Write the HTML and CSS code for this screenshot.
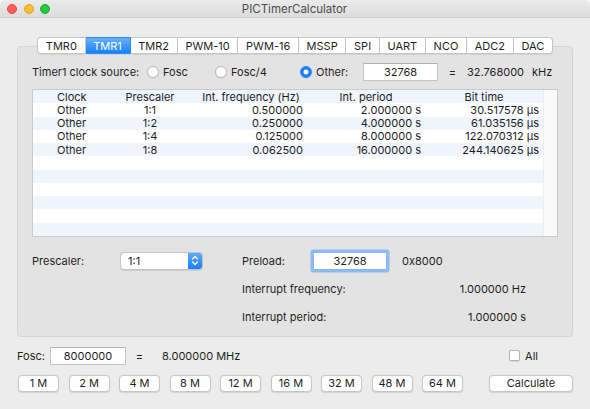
FILE: index.html
```html
<!DOCTYPE html>
<html lang="en">
<head>
    <meta charset="UTF-8">
    <title>PICTimerCalculator</title>
    <link rel="stylesheet" href="styles.css">
</head>
<body>
    <div class="window">
        <div class="titlebar">
            <div class="lights">
                <span class="light red"></span>
                <span class="light yellow"></span>
                <span class="light green"></span>
            </div>
            <div class="title">PICTimerCalculator</div>
        </div>

        <div class="content">
            <div class="tabs">
                <span class="tab">TMR0</span>
                <span class="tab active">TMR1</span>
                <span class="tab">TMR2</span>
                <span class="tab">PWM-10</span>
                <span class="tab">PWM-16</span>
                <span class="tab">MSSP</span>
                <span class="tab">SPI</span>
                <span class="tab">UART</span>
                <span class="tab">NCO</span>
                <span class="tab">ADC2</span>
                <span class="tab">DAC</span>
            </div>

            <div class="pane">
                <div class="source-row">
                    <span class="source-label">Timer1 clock source:</span>
                    <label class="option opt-fosc"><span class="radio"></span>Fosc</label>
                    <label class="option opt-fosc4"><span class="radio"></span>Fosc/4</label>
                    <label class="option opt-other"><span class="radio checked"></span>Other:</label>
                    <span class="field source-field">32768</span>
                    <span class="equals">=</span>
                    <span class="freq">32.768000</span>
                    <span class="unit">kHz</span>
                </div>

                <div class="table">
                    <div class="rows">
                        <div class="row head">
                            <span class="c1">Clock</span><span class="c2">Prescaler</span><span class="c3">Int. frequency (Hz)</span><span class="c4">Int. period</span><span class="c5">Bit time</span>
                        </div>
                        <div class="row">
                            <span class="c1">Other</span><span class="c2">1:1</span><span class="c3">0.500000</span><span class="c4">2.000000 s</span><span class="c5">30.517578 µs</span>
                        </div>
                        <div class="row">
                            <span class="c1">Other</span><span class="c2">1:2</span><span class="c3">0.250000</span><span class="c4">4.000000 s</span><span class="c5">61.035156 µs</span>
                        </div>
                        <div class="row">
                            <span class="c1">Other</span><span class="c2">1:4</span><span class="c3">0.125000</span><span class="c4">8.000000 s</span><span class="c5">122.070312 µs</span>
                        </div>
                        <div class="row">
                            <span class="c1">Other</span><span class="c2">1:8</span><span class="c3">0.062500</span><span class="c4">16.000000 s</span><span class="c5">244.140625 µs</span>
                        </div>
                        <div class="row"></div>
                        <div class="row"></div>
                        <div class="row"></div>
                        <div class="row"></div>
                        <div class="row"></div>
                        <div class="row"></div>
                    </div>
                    <div class="scroll-track"></div>
                </div>

                <div class="settings">
                    <div class="settings-left">
                        <span class="settings-label">Prescaler:</span>
                        <div class="select">
                            <span class="select-value">1:1</span>
                            <span class="stepper">
                                <svg width="8" height="11" viewBox="0 0 8 11">
                                    <path d="M1.5 4 L4 1.5 L6.5 4 M1.5 7 L4 9.5 L6.5 7" fill="none" stroke="#fff" stroke-width="1.2" stroke-linecap="round" stroke-linejoin="round"/>
                                </svg>
                            </span>
                        </div>
                    </div>
                    <div class="settings-right">
                        <div class="preload-row">
                            <span class="preload-label">Preload:</span>
                            <span class="field focused">32768</span>
                            <span class="hex">0x8000</span>
                        </div>
                        <div class="result-row">
                            <span>Interrupt frequency:</span>
                            <span>1.000000 Hz</span>
                        </div>
                        <div class="result-row">
                            <span>Interrupt period:</span>
                            <span>1.000000 s</span>
                        </div>
                    </div>
                </div>
            </div>

            <div class="fosc-row">
                <span class="fosc-label">Fosc:</span>
                <span class="field fosc-field">8000000</span>
                <span class="equals fosc-eq">=</span>
                <span class="fosc-value">8.000000 MHz</span>
                <label class="check-all"><span class="checkbox"></span>All</label>
            </div>

            <div class="button-row">
                <div class="presets">
                    <button class="btn">1 M</button>
                    <button class="btn">2 M</button>
                    <button class="btn">4 M</button>
                    <button class="btn">8 M</button>
                    <button class="btn">12 M</button>
                    <button class="btn">16 M</button>
                    <button class="btn">32 M</button>
                    <button class="btn">48 M</button>
                    <button class="btn">64 M</button>
                </div>
                <button class="btn calculate">Calculate</button>
            </div>
        </div>
    </div>
</body>
</html>
```

FILE: styles.css
```css
:root {
    --window: #ececec;
    --pane: #e3e3e3;
    --pane-border: #d5d5d5;
    --text: #1f1f1f;
    --field-border: #c4c4c4;
    --blue: #1a7ffb;
    --stripe: #eff4fd;
}

* {
    box-sizing: border-box;
}

body {
    margin: 0;
    background: #ffffff;
    font-family: 'Inter', 'Liberation Sans', sans-serif;
    font-size: 11px;
    color: var(--text);
}

.window {
    width: 590px;
    height: 409px;
    background: var(--window);
    border-radius: 5px 5px 0 0;
    overflow: hidden;
}

/* title bar */
.titlebar {
    height: 18px;
    display: flex;
    align-items: center;
    background: linear-gradient(#ebebeb, #dcdcdc);
    border-bottom: 1px solid #cfcfcf;
}

.lights {
    display: flex;
    gap: 6.5px;
    padding-left: 7px;
}

.light {
    width: 10px;
    height: 10px;
    border-radius: 50%;
}

.light.red { background: #fc5f57; border: 0.5px solid #e2463f; }
.light.yellow { background: #fdbc2e; border: 0.5px solid #e1a116; }
.light.green { background: #28c840; border: 0.5px solid #17ae2b; }

.title {
    flex: 1;
    text-align: center;
    margin-right: 51px;
    padding-top: 1px;
    color: #4d4d4d;
    font-size: 11.5px;
}

.content {
    padding: 19px 17px 0;
}

/* tabs */
.tabs {
    display: flex;
    justify-content: center;
    position: relative;
    z-index: 1;
}

.tab {
    flex-shrink: 0;
    white-space: nowrap;
    height: 17px;
    padding: 0 7.7px;
    display: flex;
    align-items: center;
    background: #ffffff;
    border: 1px solid #c6c6c6;
    border-left: none;
    box-shadow: 0 0.5px 1px rgba(0, 0, 0, 0.08);
}

.tab:first-child {
    border-left: 1px solid #c6c6c6;
    border-radius: 4px 0 0 4px;
}

.tab:last-child {
    border-radius: 0 4px 4px 0;
}

.tab.active {
    background: linear-gradient(#68b0fb, #1681fb);
    border-color: #2d8cf7;
    color: #ffffff;
}

.pane {
    margin-top: -8px;
    background: var(--pane);
    border: 1px solid var(--pane-border);
    border-radius: 4px;
    padding: 16px 14px 8px;
}

/* clock source row */
.source-row {
    display: flex;
    align-items: center;
    height: 17px;
}

.source-label {
    width: 115px;
}

.option {
    display: flex;
    align-items: center;
    gap: 4px;
}

.opt-fosc { width: 68px; }
.opt-fosc4 { width: 85px; }
.opt-other { width: 63px; }

.radio {
    width: 12px;
    height: 12px;
    border-radius: 50%;
    background: #ffffff;
    border: 1px solid #b8b8b8;
    box-shadow: 0 0.5px 1px rgba(0, 0, 0, 0.1);
}

.radio.checked {
    background: radial-gradient(circle, #ffffff 0 2.2px, var(--blue) 2.8px);
    border-color: #2b86f4;
}

.field {
    display: flex;
    align-items: center;
    justify-content: center;
    background: #ffffff;
    border: 1px solid var(--field-border);
    border-top-color: #b0b0b0;
    height: 18px;
}

.source-field {
    width: 75px;
}

.equals {
    width: 29px;
    text-align: center;
}

.unit {
    margin-left: 8px;
}

/* results table */
.table {
    margin-top: 9px;
    display: flex;
    border: 1px solid #cacaca;
    background: #ffffff;
}

.rows {
    width: 510px;
}

.row {
    height: 13.27px;
    display: flex;
    align-items: center;
    line-height: 1;
    padding-top: 1px;
    color: #1e1e1e;
}

.row:nth-child(odd) {
    background: var(--stripe);
}

.row span {
    padding-right: 4px;
    text-align: right;
}

.c1 { width: 72px; padding-left: 24px; text-align: left !important; }
.c2 { width: 90px; text-align: center !important; padding: 0 !important; }
.c3 { width: 112px; }
.c4 { width: 118px; }
.c5 { width: 118px; }

.head .c3, .head .c4, .head .c5 {
    text-align: center;
    padding: 0;
}

.scroll-track {
    flex: 1;
    background: #fafafa;
    border-left: 1px solid #ededed;
}

/* prescaler / preload */
.settings {
    display: flex;
    margin-top: 13px;
}

.settings-left {
    width: 210px;
    height: 22px;
    display: flex;
    align-items: center;
}

.settings-label {
    width: 88px;
}

.select {
    width: 83px;
    height: 18px;
    display: flex;
    background: #ffffff;
    border: 1px solid #c4c4c4;
    border-radius: 4px;
    overflow: hidden;
    box-shadow: 0 0.5px 1px rgba(0, 0, 0, 0.1);
}

.select-value {
    flex: 1;
    padding-left: 7px;
    display: flex;
    align-items: center;
}

.stepper {
    width: 14px;
    display: flex;
    align-items: center;
    justify-content: center;
    background: linear-gradient(#5eaafb, #1a7ffb);
}

.settings-right {
    width: 284px;
    display: flex;
    flex-direction: column;
    gap: 6px;
}

.preload-row,
.result-row {
    height: 22px;
    display: flex;
    align-items: center;
}

.result-row {
    justify-content: space-between;
}

.preload-label {
    width: 71px;
}

.field.focused {
    width: 74px;
    border-color: #8ab6ee;
    box-shadow: 0 0 0 2.5px #8cbbf3;
    border-radius: 1px;
}

.hex {
    margin-left: 15px;
}

/* oscillator row */
.fosc-row {
    margin-top: 10px;
    height: 18px;
    display: flex;
    align-items: center;
}

.fosc-label {
    width: 33px;
}

.fosc-field {
    width: 76px;
}

.fosc-eq {
    width: 27px;
}

.fosc-value {
    margin-left: 9px;
}

.check-all {
    margin-left: auto;
    margin-right: 35px;
    display: flex;
    align-items: center;
    gap: 5px;
}

.checkbox {
    width: 11px;
    height: 11px;
    background: #ffffff;
    border: 1px solid #b4b4b4;
    border-radius: 2px;
    box-shadow: 0 0.5px 1px rgba(0, 0, 0, 0.1);
}

/* preset buttons */
.button-row {
    margin-top: 10px;
    display: flex;
    justify-content: space-between;
    padding-left: 1px;
}

.presets {
    display: flex;
    gap: 9.5px;
}

.btn {
    width: 41px;
    height: 17px;
    padding: 0;
    font-family: inherit;
    font-size: 11px;
    color: var(--text);
    background: #ffffff;
    border: 1px solid #c6c6c6;
    border-radius: 4px;
    box-shadow: 0 0.5px 1px rgba(0, 0, 0, 0.12);
}

.btn.calculate {
    width: 84px;
}
```
